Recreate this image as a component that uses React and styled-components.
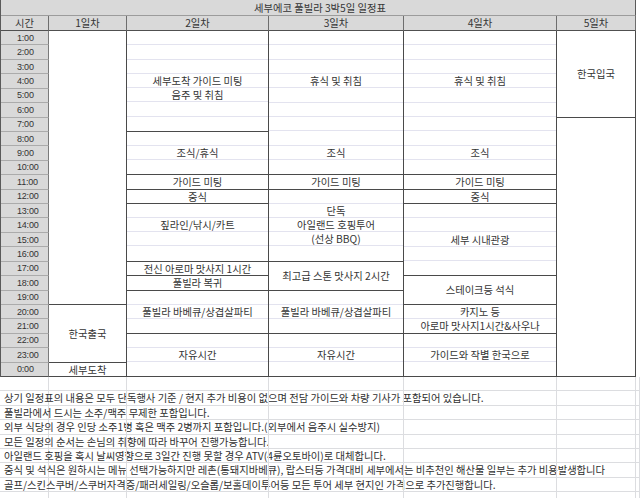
import React from 'react'
import styled, { createGlobalStyle, css } from 'styled-components'

// styling
const GlobalStyle = createGlobalStyle`
  *, *::before, *::after { box-sizing: border-box; }
  html, body { margin: 0; padding: 0; background: #fff; }
  body {
    font-family: 'Noto Sans CJK KR', 'Noto Sans', sans-serif;
    color: #353535;
  }
`

const Page = styled.div`
  width: 640px;
  height: 498px;
  overflow: hidden;
`

const Sheet = styled.div`
  display: grid;
  grid-template-columns: 48px 78px 142px 135px 153px 79px;
  grid-template-rows: 16px 15px repeat(24, 1fr);
  width: 636px;
  height: 377px;
  border-left: 1px solid #5a5a5a;
  font-size: 10.3px;
`

const Title = styled.div`
  grid-column: 1 / -1;
  display: flex;
  align-items: center;
  justify-content: center;
  padding-left: 4px;
  background: #d9d9d9;
  border-right: 1px solid #5a5a5a;
  border-bottom: 1px solid #9c9c9c;
  line-height: 14px;
`

const HeadCell = styled.div`
  display: flex;
  align-items: center;
  justify-content: center;
  background: #d9d9d9;
  border-right: 1px solid #6e6e6e;
  border-bottom: 1px solid #505050;
  line-height: 14px;
`

const TimeCell = styled.div`
  grid-column: 1;
  display: flex;
  align-items: center;
  padding-left: 16px;
  background: #d9d9d9;
  border-right: 1px solid #7a7a7a;
  border-bottom: 1px solid ${({ last }) => (last ? '#505050' : '#ababab')};
  font-family: 'Liberation Sans', Arial, sans-serif;
  font-size: 9px;
  letter-spacing: -0.2px;
  color: #333;
`

const Block = styled.div`
  grid-column: ${({ $col }) => $col};
  grid-row: ${({ $row, $span }) => `${$row + 2} / span ${$span}`};
  border-right: 1px solid #4a4a4a;
  border-bottom: 1px solid #4a4a4a;
  background: #fff;
  min-height: 0;

  ${({ $merged, $span }) =>
    $merged
      ? css`
          display: flex;
          align-items: center;
          justify-content: center;
        `
      : css`
          display: grid;
          grid-template-rows: repeat(${$span}, 1fr);
        `}
`

const Line = styled.div`
  display: flex;
  align-items: center;
  justify-content: center;
  min-height: 0;
  border-bottom: 1px solid #e3e3ef;
  white-space: nowrap;
  line-height: 13px;

  &:last-child {
    border-bottom: none;
  }
`

const Notes = styled.div`
  width: 640px;
`

const NoteRow = styled.div`
  display: grid;
  grid-template-columns: 49px 78px 142px 135px 153px 79px 4px;
  height: 14.42px;
  border-bottom: 1px solid #dcdde0;
`

const NoteCell = styled.div`
  border-right: 1px solid #dcdde0;
  min-width: 0;

  ${({ text }) =>
    text &&
    css`
      padding-left: 4px;
      white-space: nowrap;
      overflow: visible;
      font-size: 10.3px;
      line-height: 13.5px;
      color: #303030;
    `}
`
//endstyling

const hours = [
  '1:00', '2:00', '3:00', '4:00', '5:00', '6:00', '7:00', '8:00',
  '9:00', '10:00', '11:00', '12:00', '13:00', '14:00', '15:00', '16:00',
  '17:00', '18:00', '19:00', '20:00', '21:00', '22:00', '23:00', '0:00',
]

const days = ['시간', '1일차', '2일차', '3일차', '4일차', '5일차']

// col: sheet column, row: first hour row (1 = 1:00), lines: { hourRow: text }
const blocks = [
  { col: 2, row: 1, span: 19, merged: '' },
  { col: 2, row: 20, span: 4, merged: '한국출국' },
  { col: 2, row: 24, span: 1, merged: '세부도착' },

  { col: 3, row: 1, span: 7, lines: { 4: '세부도착 가이드 미팅', 5: '음주 및 취침' } },
  { col: 3, row: 8, span: 3, lines: { 9: '조식/휴식' } },
  { col: 3, row: 11, span: 1, lines: { 11: '가이드 미팅' } },
  { col: 3, row: 12, span: 1, lines: { 12: '중식' } },
  { col: 3, row: 13, span: 4, lines: { 14: '짚라인/낚시/카트' } },
  { col: 3, row: 17, span: 1, lines: { 17: '전신 아로마 맛사지 1시간' } },
  { col: 3, row: 18, span: 1, lines: { 18: '풀빌라 복귀' } },
  { col: 3, row: 19, span: 3, lines: { 20: '풀빌라 바베큐/상겹살파티' } },
  { col: 3, row: 22, span: 3, lines: { 23: '자유시간' } },

  { col: 4, row: 1, span: 10, lines: { 4: '휴식 및 취침', 9: '조식' } },
  { col: 4, row: 11, span: 1, lines: { 11: '가이드 미팅' } },
  { col: 4, row: 12, span: 5, lines: { 13: '단독', 14: '아일랜드 호핑투어', 15: '(선상 BBQ)' } },
  { col: 4, row: 17, span: 2, merged: '최고급 스톤 맛사지 2시간' },
  { col: 4, row: 19, span: 3, lines: { 20: '풀빌라 바베큐/상겹살파티' } },
  { col: 4, row: 22, span: 3, lines: { 23: '자유시간' } },

  { col: 5, row: 1, span: 10, lines: { 4: '휴식 및 취침', 9: '조식' } },
  { col: 5, row: 11, span: 1, lines: { 11: '가이드 미팅' } },
  { col: 5, row: 12, span: 1, lines: { 12: '중식' } },
  { col: 5, row: 13, span: 5, lines: { 15: '세부 시내관광' } },
  { col: 5, row: 18, span: 2, merged: '스테이크등 석식' },
  { col: 5, row: 20, span: 2, lines: { 20: '카지노 등', 21: '아로마 맛사지1시간&사우나' } },
  { col: 5, row: 22, span: 3, lines: { 23: '가이드와 작별 한국으로' } },

  { col: 6, row: 1, span: 6, merged: '한국입국' },
  { col: 6, row: 7, span: 18, merged: '' },
]

const notes = [
  '',
  '상기 일정표의 내용은 모두 단독행사 기준 / 현지 추가 비용이 없으며 전담 가이드와 차량 기사가 포함되어 있습니다.',
  '풀빌라에서 드시는 소주/맥주 무제한 포함입니다.',
  '외부 식당의 경우 인당 소주1병 혹은 맥주 2병까지 포함입니다.(외부에서 음주시 실수방지)',
  '모든 일정의 순서는 손님의 취향에 따라 바꾸어 진행가능합니다.',
  '아일랜드 호핑을 혹시 날씨영향으로 3일간 진행 못할 경우 ATV(4륜오토바이)로 대체합니다.',
  '중식 및 석식은 원하시는 메뉴 선택가능하지만 레촌(통돼지바베큐), 랍스터등 가격대비 세부에서는 비추천인 해산물 일부는 추가 비용발생합니다',
  '골프/스킨스쿠버/스쿠버자격증/패러세일링/오슬롭/보홀데이투어등 모든 투어 세부 현지인 가격으로 추가진행합니다.',
  '',
]

const ScheduleBlock = ({ col, row, span, merged, lines }) => {
  if (merged !== undefined) {
    return (
      <Block $col={col} $row={row} $span={span} $merged>
        {merged}
      </Block>
    )
  }
  const cells = []
  for (let i = 0; i < span; i++) {
    cells.push(<Line key={i}>{lines[row + i] || ''}</Line>)
  }
  return (
    <Block $col={col} $row={row} $span={span}>
      {cells}
    </Block>
  )
}

const App = () => {
  return (
    <Page>
      <GlobalStyle />
      <Sheet>
        <Title>세부에코 풀빌라 3박5일 일정표</Title>
        {days.map((d) => (
          <HeadCell key={d}>{d}</HeadCell>
        ))}
        {hours.map((h, i) => (
          <TimeCell key={h} last={i === hours.length - 1}>
            {h}
          </TimeCell>
        ))}
        {blocks.map((b, i) => (
          <ScheduleBlock key={i} {...b} />
        ))}
      </Sheet>
      <Notes>
        {notes.map((n, i) => (
          <NoteRow key={i}>
            <NoteCell text={n || undefined}>{n}</NoteCell>
            <NoteCell />
            <NoteCell />
            <NoteCell />
            <NoteCell />
            <NoteCell />
            <NoteCell />
          </NoteRow>
        ))}
      </Notes>
    </Page>
  )
}

export default App
